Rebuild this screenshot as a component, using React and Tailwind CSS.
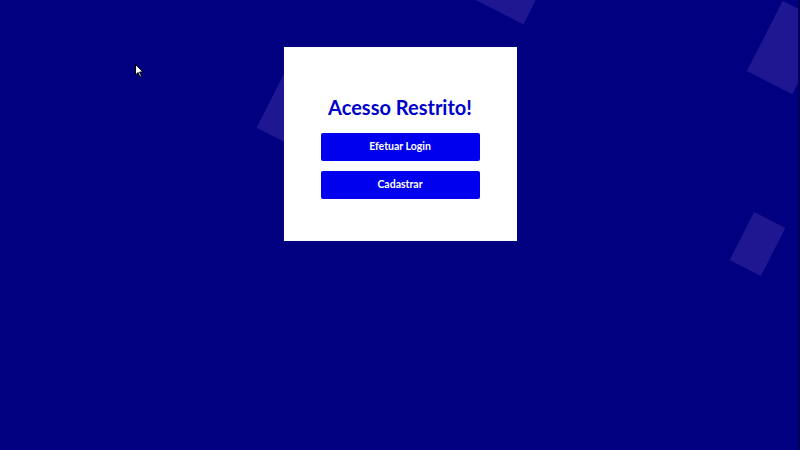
import React from 'react';

function Shape({ className }) {
  return <div className={`absolute bg-[#1f1791] ${className}`} />;
}

export default function App() {
  return (
    <div className="relative w-[800px] h-[450px] overflow-hidden bg-[#000080]" style={{ fontFamily: 'Lato, "Open Sans", sans-serif' }}>
      {/* quadrados decorativos */}
      <Shape className="left-[480px] top-[-28px] w-[56px] h-[42px] rotate-[27deg]" />
      <Shape className="left-[762px] top-[8px] w-[51px] h-[79px] rotate-[27deg]" />
      <Shape className="left-[740px] top-[217px] w-[35px] h-[54px] rotate-[27deg]" />
      <Shape className="left-[268px] top-[80px] w-[40px] h-[60px] rotate-[27deg]" />

      <div className="relative flex justify-center pt-[47px]">
        <div className="w-[233px] h-[194px] bg-white flex flex-col items-center pt-[49px]">
          <h1 className="text-[20px] leading-[22px] font-bold text-[#0000cc]">Acesso Restrito!</h1>
          <div className="flex flex-col gap-[10px] mt-[15px]">
            <button className="w-[159px] h-[28px] rounded-[2px] bg-[#0000ee] text-white text-[10.5px] font-bold">Efetuar Login</button>
            <button className="w-[159px] h-[28px] rounded-[2px] bg-[#0000ee] text-white text-[10.5px] font-bold">Cadastrar</button>
          </div>
        </div>
      </div>

      {/* cursor */}
      <svg className="absolute left-[135px] top-[64px]" width="9" height="14" viewBox="0 0 9 14">
        <path d="M0.5 0.5 L0.5 11 L3 8.5 L5 13 L6.5 12.3 L4.6 8 L8 8 Z" fill="white" stroke="black" strokeWidth="1" />
      </svg>
      <div className="absolute right-0 top-0 w-[2px] h-full bg-[#00005a]" />
    </div>
  );
}
